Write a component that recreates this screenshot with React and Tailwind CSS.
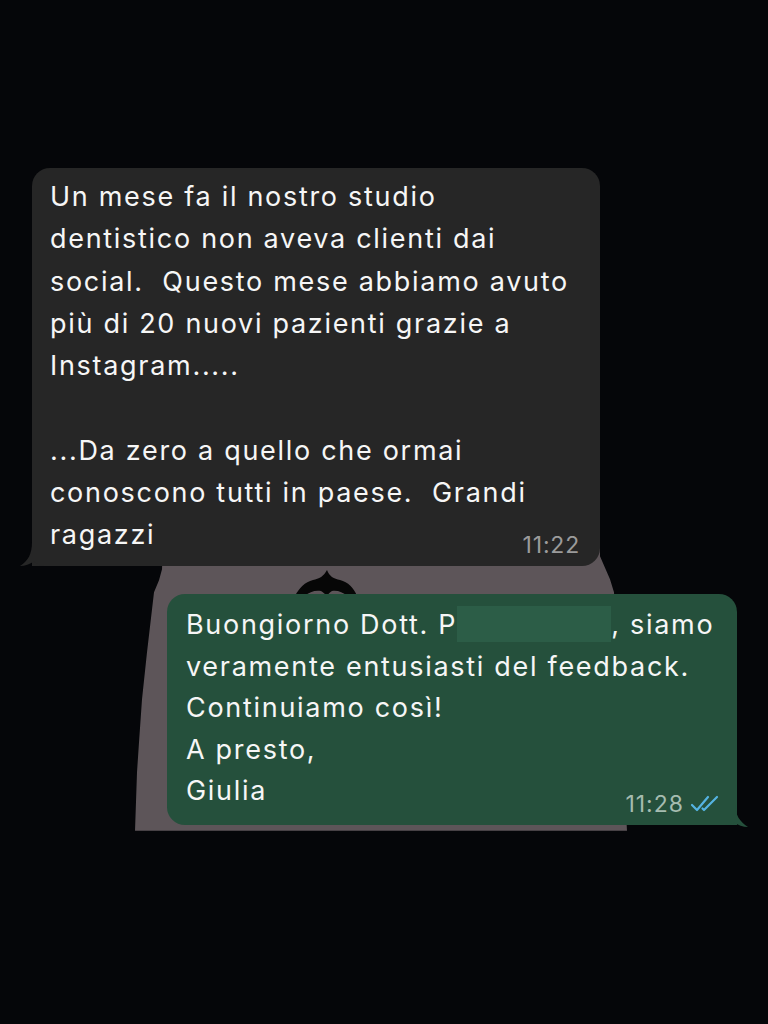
import React from 'react';

const incoming = [
  'Un mese fa il nostro studio',
  'dentistico non aveva clienti dai',
  'social.  Questo mese abbiamo avuto',
  'più di 20 nuovi pazienti grazie a',
  'Instagram.....',
  ' ',
  '...Da zero a quello che ormai',
  'conoscono tutti in paese.  Grandi',
];

const TailLeft = () => (
  <svg className="absolute left-[-12px] bottom-0" width="26" height="24" viewBox="0 0 26 24">
    <path d="M12 0 C12 12 8 19 0 24 C5 24 10 22 14 19.5 C16 21.5 19 24 26 24 L26 0 Z" fill="#262626" />
  </svg>
);

const TailRight = () => (
  <svg className="absolute right-[-11px] bottom-[-2px]" width="25" height="24" viewBox="0 0 25 24">
    <path d="M12 0 C12 12 17 19 25 24 C20 24 15 22 11 19.5 C9 21 6 22 0 22 L0 0 Z" fill="#25503c" />
  </svg>
);

const DoubleCheck = () => (
  <svg width="29" height="17" viewBox="0 0 29 17" fill="none" stroke="#55b3e2" strokeWidth="2.2" strokeLinecap="round" strokeLinejoin="round">
    <path d="M2 10 L7 15 L18 2" />
    <path d="M12.5 13.5 L14 15 L27 2" />
  </svg>
);

export default function App() {
  return (
    <div className="min-h-screen bg-[#050609] pt-[168px] font-['Inter','Liberation_Sans',sans-serif] text-[#f6f6f6]">
      {/* messaggio ricevuto */}
      <div className="relative z-10 ml-[32px] w-[568px] rounded-[18px] rounded-bl-none bg-[#262626] pl-[18px] pr-[20px] pt-[8px] pb-[10px]">
        <div className="whitespace-pre text-[27px] leading-[42.25px] tracking-[1.7px]">
          {incoming.map((line, i) => (
            <div key={i}>{line}</div>
          ))}
          <div className="flex items-end justify-between">
            <span>ragazzi</span>
            <span className="text-[23px] leading-[22px] tracking-[0.8px] text-[#9b9b9b]">11:22</span>
          </div>
        </div>
        <TailLeft />
      </div>

      {/* foto sullo sfondo + risposta */}
      <div className="relative pt-[28px] pb-[6px]">
        <div className="absolute left-[135px] top-[-24px] bottom-0 w-[492px] bg-[#5d5559] [clip-path:polygon(28px_0,465px_0,465px_14px,475px_37px,479px_50px,492px_100%,0_100%,2px_230px,4px_200px,7px_157px,12px_110px,19px_50px,24px_38px,27px_27px)]" />
        <svg className="absolute left-[295px] top-[4px]" width="62" height="26" viewBox="0 0 62 26">
          <path d="M0 26 C4 18 10 12 18 10 C24 9 29 6 32 0 C34 6 39 9 45 10 C53 12 59 18 62 26 L52 26 C48 22 42 20 37 21 C35 22 33 24 32 26 C30 24 28 22 26 21 C20 20 14 22 10 26 Z" fill="#060606" />
        </svg>

        <div className="relative ml-[167px] w-[570px] rounded-[18px] rounded-br-none bg-[#25503c] pl-[19px] pr-[18px] pt-[10px] pb-[13px]">
          <div className="whitespace-pre text-[27px] leading-[41.5px] tracking-[1.7px]">
            <div>
              Buongiorno Dott. P<span className="inline-block h-[36px] w-[154px] bg-[#2c5d47] [vertical-align:-8px]" />, siamo
            </div>
            <div>veramente entusiasti del feedback.</div>
            <div>Continuiamo così!</div>
            <div>A presto,</div>
            <div className="flex items-end justify-between">
              <span>Giulia</span>
              <span className="mb-[-3px] flex items-center gap-[6px]">
                <span className="text-[23px] leading-[22px] tracking-[1px] text-[#a6bcb0]">11:28</span>
                <DoubleCheck />
              </span>
            </div>
          </div>
          <TailRight />
        </div>
      </div>
    </div>
  );
}
